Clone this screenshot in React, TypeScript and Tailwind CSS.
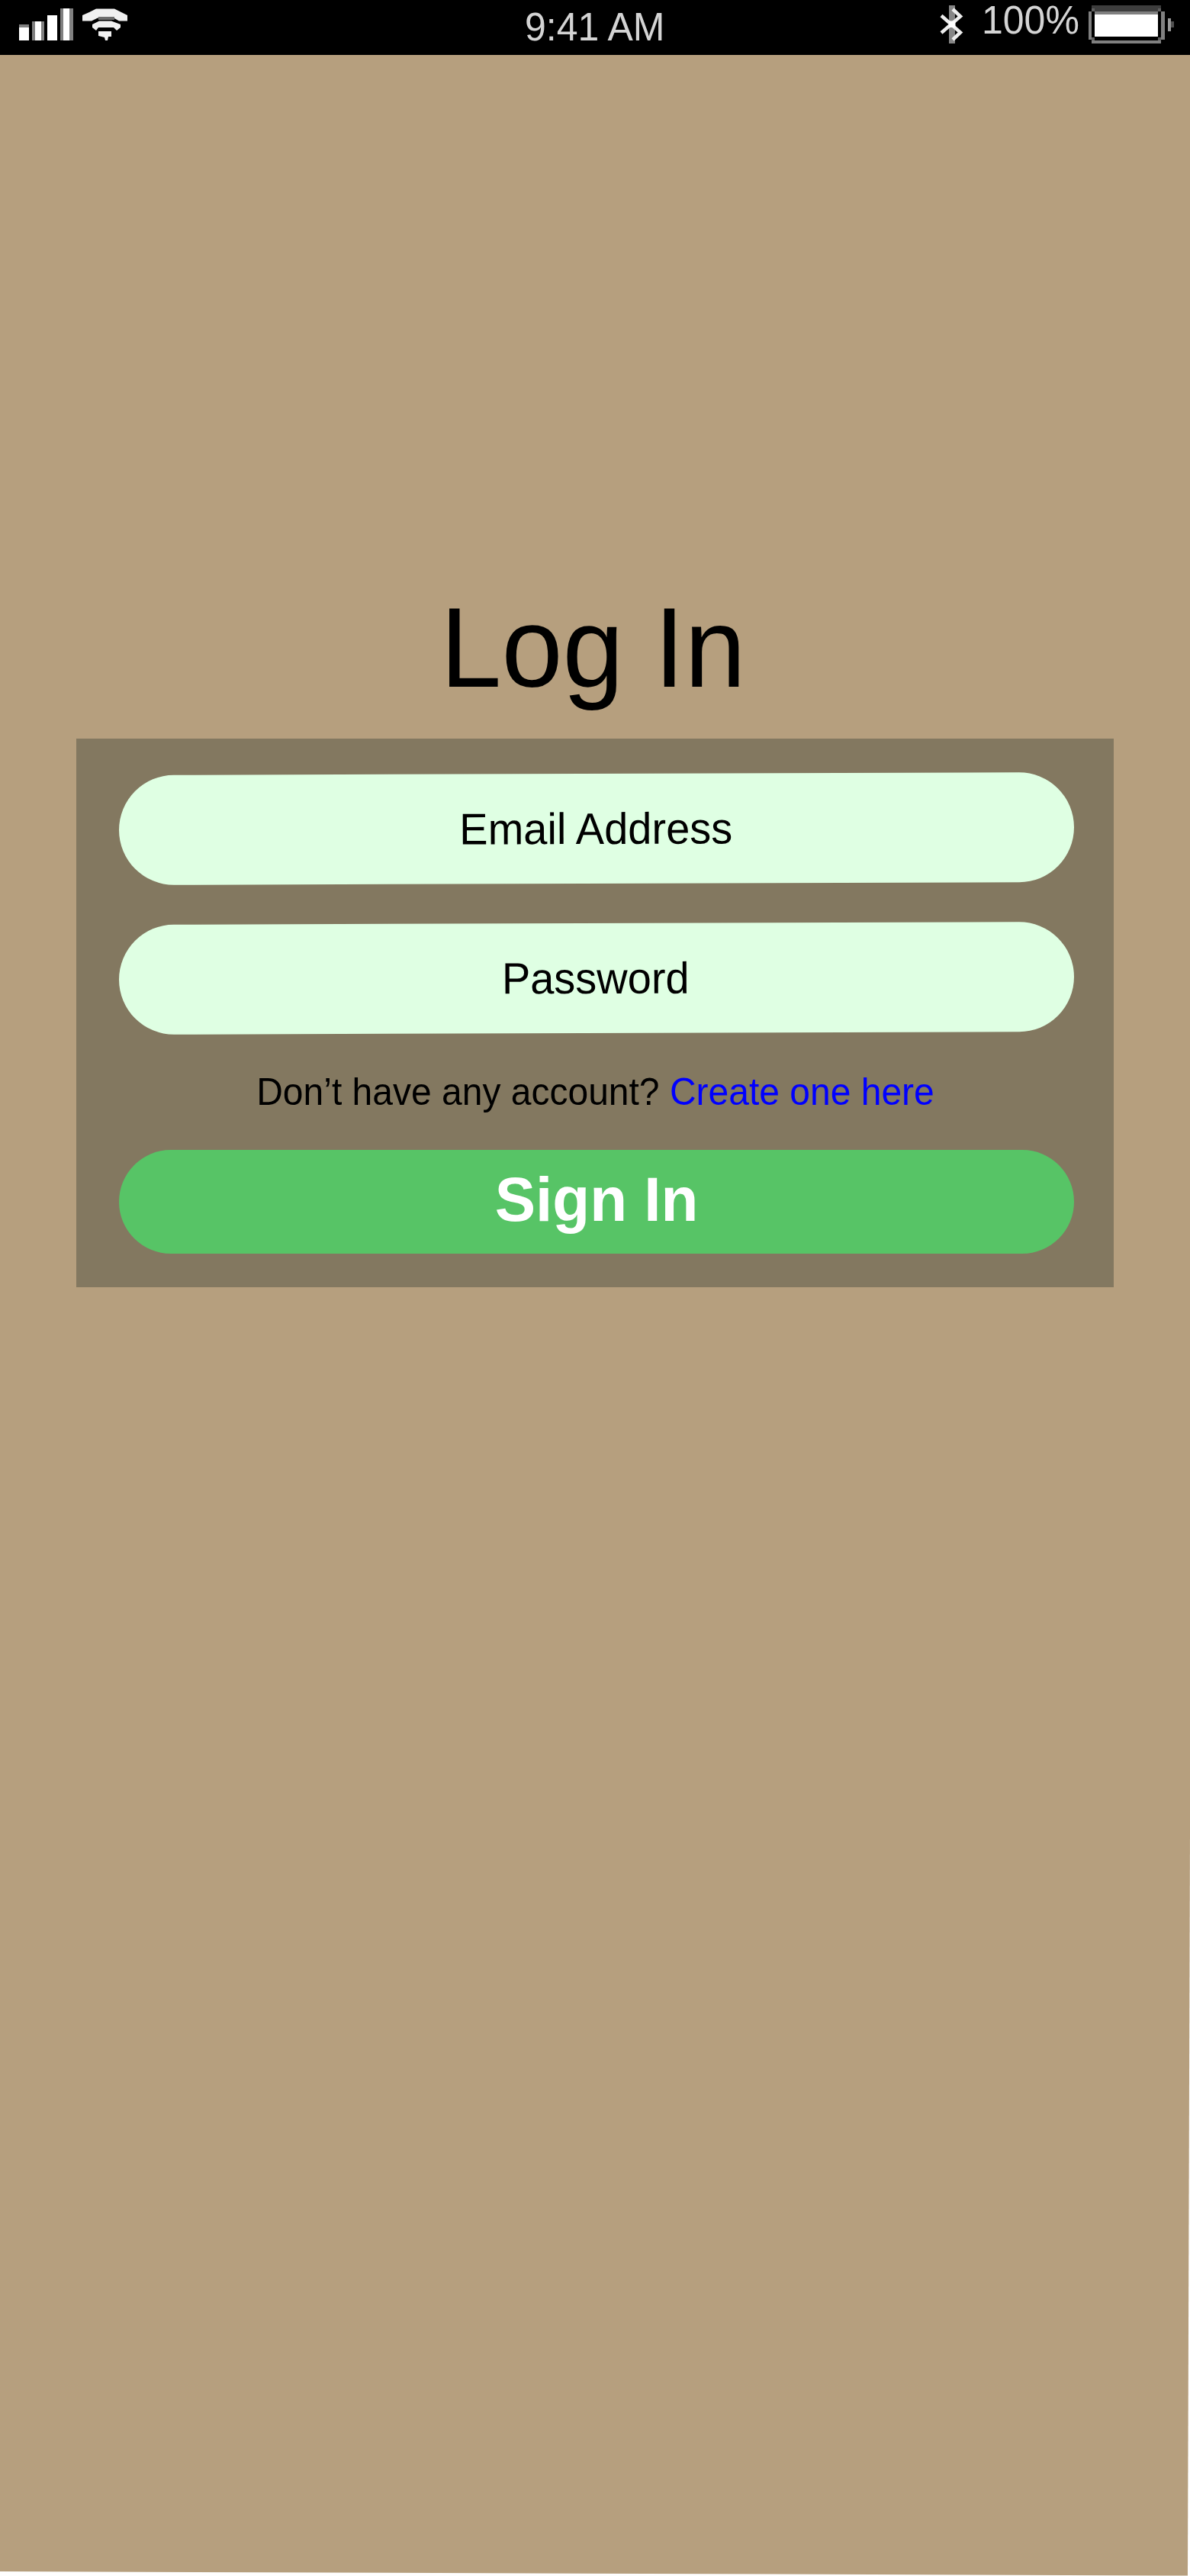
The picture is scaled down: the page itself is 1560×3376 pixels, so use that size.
import React from "react";

function Signal() {
  return (
    <svg className="ml-[25px] mt-[11px] h-[42px] w-[71px]" viewBox="25 11 71 42" shapeRendering="crispEdges">
      <path fill="#808080" d="M25 32h12.5v4H25zM42 28h16v25H42zM79 11h17v42H79z" />
      <path fill="#fff" d="M25 36h12.5v17H25zM46 28h8v25h-8zM62 19.5h13V53H62zM83 11h8v42h-8z" />
    </svg>
  );
}

function Wifi() {
  return (
    <svg className="ml-3 mt-[11px] h-[42px] w-[59px]" viewBox="108 11 59 42" fill="#f0f0f0">
      <path d="M108 20L117 16L126 11.500H150L159 16L167 20V27.500H156L150 24L144 22H133L127 24L120 27.500H108Z" />
      <path fill="#6e6e6e" d="M129 22H150V26H129Z" />
      <path d="M121 32L130 27.500H146L158 32V36L153 40L149 36H129L126 40L121 36Z" />
      <path d="M129 41H146V48H142L141 53H138L137 49L129 47Z" />
    </svg>
  );
}

function Bluetooth() {
  return (
    <svg className="ml-auto mt-[7px] h-[50px] w-8 shrink-0" viewBox="1231 7 32 50" fill="none">
      <path d="M1248 7V57" stroke="#858585" strokeWidth="8" />
      <path d="M1234 20.500L1259 42.500L1249 52" stroke="#ededed" strokeWidth="4.500" />
      <path d="M1249 12L1259 21.500L1234 43" stroke="#ededed" strokeWidth="4.500" />
      <path d="M1244 27.500h8.500v8.500h-8.500z" fill="#fff" />
    </svg>
  );
}

function Battery() {
  return (
    <svg className="ml-3 mr-[21px] mt-[7px] h-[50px] w-[112px] shrink-0" viewBox="1427 7 112 50" shapeRendering="crispEdges">
      <path fill="#3d3d3d" d="M1431 7h91v8h-91z" />
      <path fill="#808080" d="M1435 15h83v4h-83zM1431 53h91v4h-91zM1427 15h4v37h-4zM1522 15h4.500v37h-4.500z" />
      <path fill="#606060" d="M1431 11h4v4h-4zM1518 11h4v4h-4zM1431 49h4v4h-4zM1518 49h4v4h-4z" />
      <path fill="#fff" d="M1435 19h83v29h-83z" />
      <path fill="#999" d="M1531 24h4v17h-4z" />
      <path fill="#505050" d="M1535 28h4v8h-4z" />
    </svg>
  );
}

function StatusBar() {
  return (
    <header className="flex h-[72px] w-full items-start bg-black text-[50px] leading-none text-[#d4d4d4]">
      <div className="flex w-[688px] items-start">
        <Signal />
        <Wifi />
      </div>
      <span className="mt-[11px] w-[190px] origin-[0%_84%] scale-y-[1.05] whitespace-nowrap">9:41 AM</span>
      <div className="flex w-[682px] items-start">
        <Bluetooth />
        <span className="ml-6 mt-0.5 w-32 shrink-0 origin-[0%_84%] scale-y-[1.03] whitespace-nowrap">100%</span>
        <Battery />
      </div>
    </header>
  );
}

function Field({ children }: { children: React.ReactNode }) {
  return (
    <div className="flex h-36 w-[1251.500px] rotate-[-0.18deg] justify-center rounded-full bg-[#dfffe3] pt-[46px] text-[56px] leading-none">
      {children}
    </div>
  );
}

export default function App() {
  return (
    <div className="h-[3376px] w-[1560px] overflow-hidden bg-white font-['Liberation_Sans',Arial,sans-serif] text-black">
      <div className="flex h-full w-full flex-col items-center bg-[#b69f7e] [clip-path:polygon(0_0,100%_0,100%_2400px,1557px_3375.500px,0_3370px)]">
        <StatusBar />
        <h1 className="mt-[707px] mr-[5px] origin-[50%_84%] scale-y-[1.03] text-[144px] leading-none">Log In</h1>
        <main className="mt-[45px] flex h-[719px] w-[1360px] flex-col items-center bg-[#837860] pl-1 pt-[46px]">
          <Field>
            <span className="mr-px origin-[50%_84%] scale-y-[1.03]">Email Address</span>
          </Field>
          <div className="mt-[51.600px]">
            <Field>
              <span className="mr-0.5 origin-[50%_84%] scale-y-[1.03]">Password</span>
            </Field>
          </div>
          <p className="mr-[3px] mt-[54.400px] origin-[50%_84%] scale-y-[1.03] whitespace-nowrap text-[48px] leading-none">
            Don’t have any account? <a className="text-[#0000ff]">Create one here</a>
          </p>
          <button className="mt-[51px] flex h-[136.300px] w-[1252px] justify-center rounded-full bg-[#57c466] pt-[27px] text-[80px] font-bold leading-none text-white">
            <span className="origin-[50%_84%] scale-y-[1.03]">Sign In</span>
          </button>
        </main>
      </div>
    </div>
  );
}
